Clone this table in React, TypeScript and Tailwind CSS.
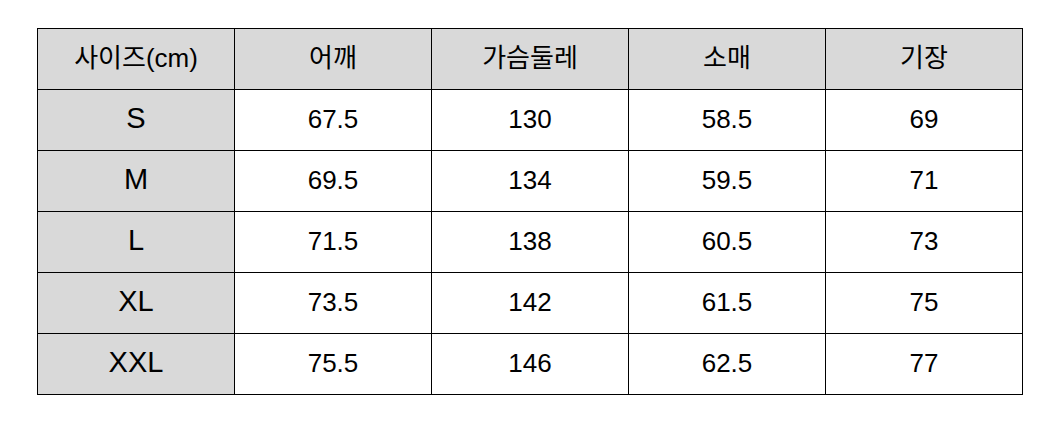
const HEADERS = ['사이즈(cm)', '어깨', '가슴둘레', '소매', '기장']

const ROWS: string[][] = [
  ['S', '67.5', '130', '58.5', '69'],
  ['M', '69.5', '134', '59.5', '71'],
  ['L', '71.5', '138', '60.5', '73'],
  ['XL', '73.5', '142', '61.5', '75'],
  ['XXL', '75.5', '146', '62.5', '77'],
]

export default function App() {
  return (
    <div
      className="w-[1058px] h-[424px] bg-white pt-[28px] pl-[37px]"
      style={{ fontFamily: '"Liberation Sans", "Noto Sans CJK KR", sans-serif' }}
    >
      <table className="border-collapse text-[26px] text-black">
        <thead>
          <tr>
            {HEADERS.map(h => (
              <th
                key={h}
                className="w-[197px] h-[61px] border border-black bg-[#d9d9d9] font-normal text-center p-0 pb-[2px]"
              >
                {h}
              </th>
            ))}
          </tr>
        </thead>
        <tbody>
          {ROWS.map(row => (
            <tr key={row[0]}>
              {row.map((cell, i) => (
                <td
                  key={i}
                  className={`w-[197px] h-[61px] border border-black text-center p-0 pb-[2px] ${
                    i === 0 ? 'bg-[#d9d9d9] text-[29px]' : 'bg-white'
                  }`}
                >
                  {cell}
                </td>
              ))}
            </tr>
          ))}
        </tbody>
      </table>
    </div>
  )
}
